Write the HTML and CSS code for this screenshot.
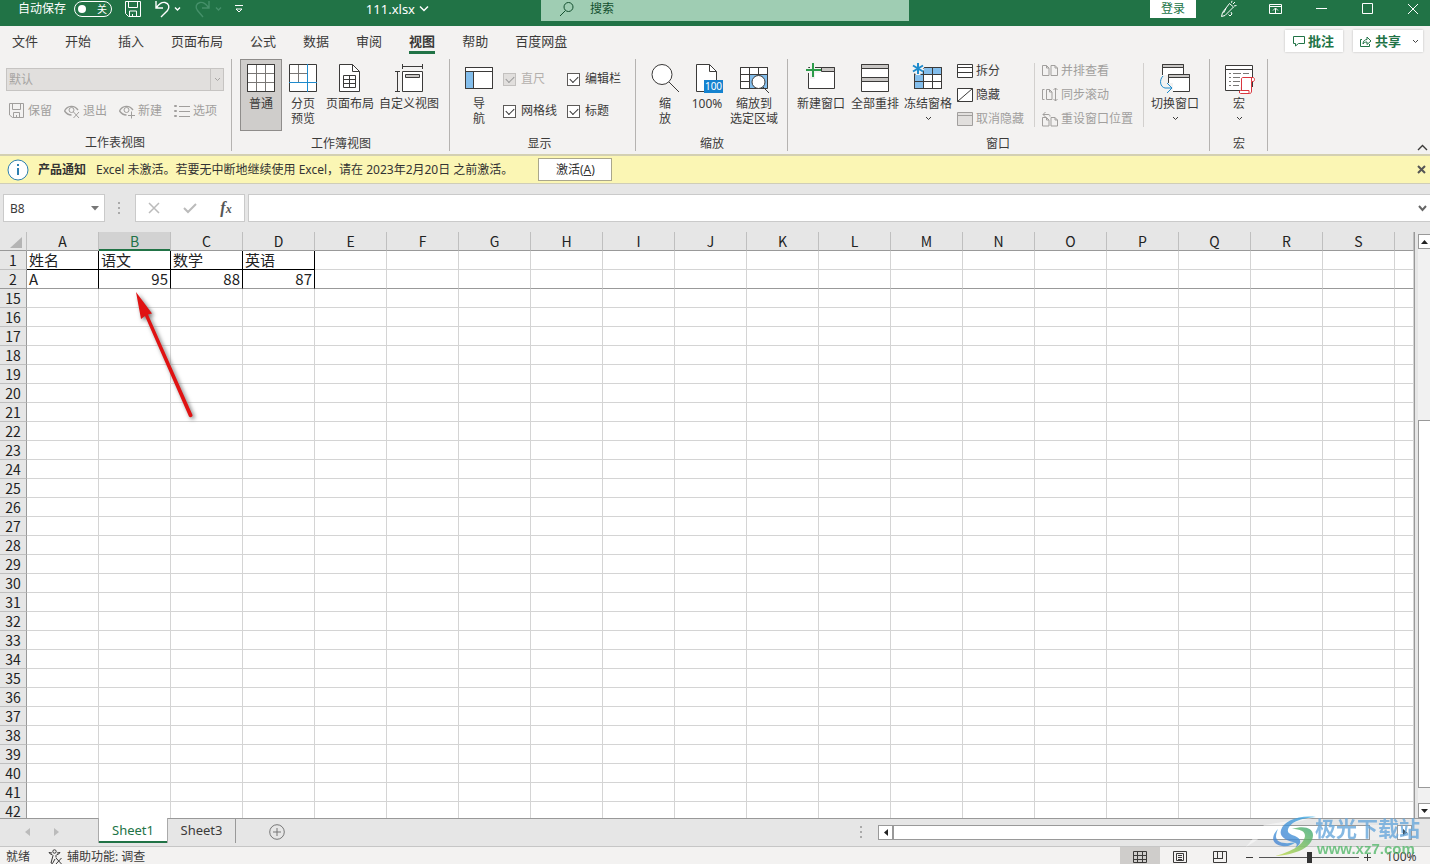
FILE: index.html
```html
<!DOCTYPE html>
<html lang="zh-CN">
<head>
<meta charset="utf-8">
<title>111.xlsx</title>
<link rel="stylesheet" href="styles.css">
</head>
<body>
<div class="app">
  <header class="titlebar">
    <div class="quick">
      <label class="autosave">自动保存
        <span class="switch"><input type="checkbox" role="switch"><span class="switch-text">关</span></span>
      </label>
      <button class="qbtn save" aria-label="保存"><svg width="18" height="18" viewBox="0 0 18 18"><path d="M1.500 1.500h15v15h-12l-3-3zM4.500 1.500v6h9v-6M5.500 16v-5h7v5M8.500 16v-2"/></svg></button>
      <button class="qbtn undo" aria-label="撤消"><svg width="28" height="18" viewBox="0 0 28 18"><path stroke-width="1.400" d="M2 1v7h7M2.500 7.500C5 4 8 2 11 2.500c4 .8 5 5 2.500 8L7 17M21 7.500l2.500 2.500L26 7.500"/></svg></button>
      <button class="qbtn redo" aria-label="恢复" disabled><svg width="28" height="18" viewBox="0 0 28 18"><path stroke-width="1.400" d="M15 1v7H8M14.500 7.500C12 4 9 2 6 2.500c-4 .8-5 5-2.500 8L9 17M22 7.500l2.500 2.500L27 7.500"/></svg></button>
      <button class="qbtn more" aria-label="自定义快速访问工具栏"><svg width="10" height="10" viewBox="0 0 10 10"><path d="M1 1.500h8M2 5l3 3 3-3z"/></svg></button>
      <button class="filename">111.xlsx <svg width="10" height="8" viewBox="0 0 10 8"><path d="M1 1.500l4 4 4-4" stroke-width="1.500"/></svg></button>
    </div>
    <label class="search"><svg width="16" height="16" viewBox="0 0 16 16"><circle cx="9.500" cy="6" r="4.500"/><path d="M6.500 9.500L1 15"/></svg><input type="text" placeholder="搜索" aria-label="搜索"></label>
    <div class="window">
      <button class="login">登录</button>
      <button class="wbtn" aria-label="新增功能"><svg width="18" height="18" viewBox="0 0 18 18"><path d="M9.500 3.500l4 3.500L5 15.500l-3.500 1 1-4zM6 8.500L3.500 13M8.500 14.500l1.500 1.500 2-2-1-2M12 .8l-.5 2M15 2l-2 2M16.500 5.500l-2.500.5"/></svg></button>
      <button class="wbtn" aria-label="功能区显示选项"><svg width="15" height="12" viewBox="0 0 15 12"><path d="M1.500 1.500h12v9h-12zM1 3.500h13M7.500 10V5.500M5 7.500L7.500 5 10 7.500"/></svg></button>
      <button class="wbtn" aria-label="最小化"><svg width="11" height="11" viewBox="0 0 11 11"><path d="M0 5.500h11"/></svg></button>
      <button class="wbtn" aria-label="最大化"><svg width="11" height="11" viewBox="0 0 11 11"><path d="M.5.500h10v10H.5z"/></svg></button>
      <button class="wbtn" aria-label="关闭"><svg width="12" height="12" viewBox="0 0 12 12"><path d="M1 1l10 10M11 1L1 11"/></svg></button>
    </div>
  </header>

  <nav class="tabs">
    <button class="tab">文件</button><button class="tab">开始</button><button class="tab">插入</button><button class="tab">页面布局</button><button class="tab">公式</button><button class="tab">数据</button><button class="tab">审阅</button><button class="tab active">视图</button><button class="tab">帮助</button><button class="tab">百度网盘</button>
    <div class="tab-actions">
      <button class="action"><svg width="14" height="12" viewBox="0 0 14 12"><path d="M1.500 1.500h11v7h-6l-3 2.500v-2.500h-2z"/></svg>批注</button>
      <button class="action share"><svg width="13" height="13" viewBox="0 0 13 13"><path d="M3 4.500H1.500v7h9V9M4 9c0-3 2-4.500 4-4.500V2l4 4-4 3.500V7C6 7 5 7.500 4 9z"/></svg>共享<svg class="caret" width="7" height="5" viewBox="0 0 7 5"><path d="M1 1l2.500 2.500L6 1"/></svg></button>
    </div>
  </nav>

  <section class="ribbon">
    <div class="group sheetview">
      <div class="body stack">
        <span class="combo"><select disabled aria-label="工作表视图"><option>默认</option></select><svg width="7" height="5" viewBox="0 0 7 5"><path d="M1 1l2.500 2.500L6 1"/></svg></span>
        <div class="minirow">
          <button class="mini" disabled><svg width="16" height="16" viewBox="0 0 16 16"><path d="M.5.500h14v14H3.500l-3-2.500zM3.500.5v6h8v-6M4.500 14.500v-5h6v5M7.500 14v-2"/></svg>保留</button>
          <button class="mini" disabled><svg width="16" height="16" viewBox="0 0 16 16"><path stroke-width="1.400" d="M.5 8c3-6 10-6 13.500-1M.5 8c2 3 4 4 7 4"/><circle cx="7.500" cy="7" r="2.500"/><path d="M9.500 9l5.500 6M15 9l-5.500 6"/></svg>退出</button>
          <button class="mini" disabled><svg width="16" height="16" viewBox="0 0 16 16"><path stroke-width="1.400" d="M.5 8c3-6 10-6 13.500-1M.5 8c2 3 4 4 7 4"/><circle cx="7.500" cy="7" r="2.500"/><path d="M12.500 8.500v7M9 12.500h7"/></svg>新建</button>
          <button class="mini" disabled><svg width="16" height="16" viewBox="0 0 16 16"><path d="M.5 2.500h2v1h-2zM.5 7.500h2v1h-2zM.5 12.500h2v1h-2zM5 3.500h11M5 8.500h11M5 13.500h11"/></svg>选项</button>
        </div>
      </div>
      <div class="caption">工作表视图</div>
    </div>

    <div class="group">
      <div class="body">
        <button class="big w42 pressed"><svg width="32" height="32" viewBox="0 0 32 32"><path class="w" d="M2.500 2.500h27v27h-27z"/><path class="g" d="M11.500 3v26M20.500 3v26M3 11.500h26M3 20.500h26"/><path d="M2.500 2.500h27v27h-27z"/></svg>普通</button>
        <button class="big w42"><svg width="32" height="32" viewBox="0 0 32 32"><path class="w" d="M2.500 2.500h27v27h-27z"/><path class="g" d="M11.500 3v17M3 11.500h17"/><path class="b" d="M20.500 2v28M2 20.500h28"/></svg>分页<br>预览</button>
        <button class="big w52"><svg width="32" height="32" viewBox="0 0 32 32"><path class="w" d="M5.500 2.500h13l7 7v20h-20z"/><path d="M18.500 2.500v7h7M9.500 13.500h12v12h-12zM9.500 17.500h12M9.500 21.500h12M15.500 13.500v12"/></svg>页面布局</button>
        <button class="big w66"><svg width="32" height="32" viewBox="0 0 32 32"><path class="w" d="M9.500 9.500h20v20h-20z"/><path class="s" d="M12.500 12.500h14v3h-14z"/><path d="M9.500 4.500h20M9.500 2v5M29.500 2v5M4.500 9v20M2 9.500h5M2 29.500h5"/></svg>自定义视图</button>
      </div>
      <div class="caption">工作簿视图</div>
    </div>

    <div class="group show">
      <div class="body">
        <button class="big w42"><svg width="32" height="32" viewBox="0 0 32 32"><path class="w" d="M2.500 5.500h27v21h-27z"/><path class="f" d="M3 9h7v17H3z"/><path d="M2.500 5.500h27v21h-27zM3 9.500h26M10.500 10v16"/></svg>导<br>航</button>
        <div class="checks">
          <label class="off"><input type="checkbox" checked disabled>直尺</label>
          <label><input type="checkbox" checked>编辑栏</label>
          <label><input type="checkbox" checked>网格线</label>
          <label><input type="checkbox" checked>标题</label>
        </div>
      </div>
      <div class="caption">显示</div>
    </div>

    <div class="group">
      <div class="body">
        <button class="big w42"><svg width="32" height="32" viewBox="0 0 32 32"><circle class="w" cx="13" cy="12.500" r="10"/><path d="M20 20l10 10"/></svg>缩<br>放</button>
        <button class="big w42"><svg width="32" height="32" viewBox="0 0 32 32"><path class="w" d="M5.500 2.500h13l7 7v20h-20z"/><path d="M18.500 2.500v7h7"/><path class="bf" d="M13 18h19v13H13z"/><text class="hundred" x="22.500" y="28" text-anchor="middle">100</text></svg>100%</button>
        <button class="big w52"><svg width="32" height="32" viewBox="0 0 32 32"><path class="w" d="M2.500 5.500h27v21h-27z"/><path class="f" d="M12 12h18v15H12z"/><path d="M2.500 5.500h27v21h-27zM11.500 5v22M20.500 5v7M3 12.500h26M3 19.500h9"/><circle class="w" cx="20.500" cy="20" r="6.500"/><path d="M25 25l6 6"/></svg>缩放到<br>选定区域</button>
      </div>
      <div class="caption">缩放</div>
    </div>

    <div class="group windows">
      <div class="body">
        <button class="big w54"><svg width="32" height="32" viewBox="0 0 32 32"><path class="w" d="M3.500 5.500h26v21h-26z"/><path class="s" d="M16.500 5.500h13v4h-13z"/><path class="halo" d="M7.500 1v16M0 8.500h16"/><path class="gr" d="M8 1v14M1 8h15"/></svg>新建窗口</button>
        <button class="big w54"><svg width="32" height="32" viewBox="0 0 32 32"><path class="w" d="M2.500 2.500h27v27h-27z"/><path class="s" d="M2.500 2.500h27v4h-27zM2.500 15.500h27v4h-27z"/></svg>全部重排</button>
        <button class="big w52"><svg width="32" height="32" viewBox="0 0 32 32"><path class="w" d="M2.500 5.500h27v21h-27z"/><path class="f" d="M3 6h26v6H12v14H3z"/><path d="M2.500 5.500h27v21h-27zM11.500 5v22M20.500 5v22M3 12.500h26M3 19.500h26"/><path class="halo" d="M6 0v13M1 3.500l10 6M11 3.500l-10 6"/><path class="ast" d="M6 1v11M1 3.500l10 6M11 3.500l-10 6"/></svg>冻结窗格<svg class="caret" width="7" height="5" viewBox="0 0 7 5"><path d="M1 1l2.500 2.500L6 1"/></svg></button>
        <div class="ministack">
          <button class="mini"><svg width="16" height="16" viewBox="0 0 16 16"><path class="w" d="M.5 1.500h15v13H.5z"/><path d="M.5 4.500h15M.5 9.500h15"/></svg>拆分</button>
          <button class="mini"><svg width="16" height="16" viewBox="0 0 16 16"><path class="w" d="M.5 1.500h15v13H.5z"/><path d="M.5 14.500l15-13"/></svg>隐藏</button>
          <button class="mini" disabled><svg width="16" height="16" viewBox="0 0 16 16"><path class="dim" d="M.5 1.500h15v13H.5zM.5 4.500h15"/></svg>取消隐藏</button>
        </div>
        <div class="ministack ruled">
          <button class="mini" disabled><svg width="16" height="16" viewBox="0 0 16 16"><path d="M.5 2.500h4l2.500 2.500v7.500H.5zM4.500 2.500V5H7M9 2.500h4l2.500 2.500v7.500H9zM13 2.500V5h2.500"/></svg>并排查看</button>
          <button class="mini" disabled><svg width="16" height="16" viewBox="0 0 16 16"><path d="M2.500 2.500h-2v10h2M4.500 2.500h3l2.500 2.500v7.500H4.500zM7.500 2.500V5H10M13.500 1v13M11.500 3l2-2 2 2M11.500 12l2 2 2-2"/></svg>同步滚动</button>
          <button class="mini" disabled><svg width="16" height="16" viewBox="0 0 16 16"><path d="M.5 6.500h4L7 9v6H.5zM4.500 6.500V9H7M9 6.500h4L15.500 9v6H9zM13 6.500V9h2.500M1 3.500h5c1.500 0 2 .5 2 2M3.500 1L1 3.500 3.500 6"/></svg>重设窗口位置</button>
        </div>
        <button class="big w54"><svg width="32" height="32" viewBox="0 0 32 32"><path class="w" d="M3.500 2.500h21v12h-21z"/><path class="s" d="M3.500 2.500h21v3h-21z"/><path class="bg" d="M0 13h10v18H0z"/><path class="w" d="M9.500 12.500h21v17h-21z"/><path class="s" d="M9.500 12.500h21v3h-21z"/><path class="bg" d="M8 21h6v10H8z"/><path class="b" d="M4 14c-4 4-3 11 2 12h7M8 21l5 5-5 5"/></svg>切换窗口<svg class="caret" width="7" height="5" viewBox="0 0 7 5"><path d="M1 1l2.500 2.500L6 1"/></svg></button>
      </div>
      <div class="caption">窗口</div>
    </div>

    <div class="group">
      <div class="body">
        <button class="big w42"><svg width="32" height="32" viewBox="0 0 32 32"><path class="w" d="M2.500 3.500h27v25h-27z"/><path d="M3 7.500h26"/><path class="g" d="M6 11.500h2M10 11.500h8M20 11.500h6M6 15.500h2M10 15.500h7M6 19.500h2M10 19.500h7M6 23.500h2M10 23.500h6"/><path class="bg" d="M17 25h15v7H17z"/><path class="r" d="M18.500 28.500V17c0-1 .5-1.500 1.500-1.500h10c2 0 2 4 0 4h-1.500v9.500c0 1.500-.5 2.500-2 2.500h-9c-1.500 0-1.500-3 0-3H26v3M28.500 19.500V16"/></svg>宏<svg class="caret" width="7" height="5" viewBox="0 0 7 5"><path d="M1 1l2.500 2.500L6 1"/></svg></button>
      </div>
      <div class="caption">宏</div>
    </div>
    <button class="collapse" aria-label="折叠功能区"><svg width="11" height="7" viewBox="0 0 11 7"><path stroke-width="1.400" d="M1 6l4.500-4.500L10 6"/></svg></button>
  </section>

  <section class="notice">
    <svg class="info" width="22" height="22" viewBox="0 0 22 22"><circle cx="11" cy="11" r="10"/><path d="M11 9v7M11 5v2"/></svg>
    <strong>产品通知</strong>
    <span class="message">Excel 未激活。若要无中断地继续使用 Excel，请在 2023年2月20日 之前激活。</span>
    <button class="activate">激活(<u>A</u>)</button>
    <button class="dismiss" aria-label="关闭通知"><svg width="9" height="9" viewBox="0 0 9 9"><path d="M1 1l7 7M8 1L1 8"/></svg></button>
  </section>

  <section class="formula">
    <div class="namebox"><input type="text" value="B8" aria-label="名称框"><button aria-label="展开名称框"><svg width="8" height="5" viewBox="0 0 8 5"><path d="M0 0h8L4 4.500z"/></svg></button></div>
    <svg class="dots" width="3" height="14" viewBox="0 0 3 14"><path d="M0 1h2v2H0zM0 6h2v2H0zM0 11h2v2H0z"/></svg>
    <div class="fx">
      <button aria-label="取消"><svg width="12" height="12" viewBox="0 0 12 12"><path stroke-width="1.500" d="M1 1l10 10M11 1L1 11"/></svg></button>
      <button aria-label="输入"><svg width="14" height="12" viewBox="0 0 14 12"><path class="tick" d="M1 6l4 4 8-8"/></svg></button>
      <button class="fn" aria-label="插入函数">f<sub>x</sub></button>
    </div>
    <div class="entry"><input type="text" aria-label="编辑栏"><svg width="9" height="7" viewBox="0 0 9 7"><path d="M1 1l3.500 4L8 1"/></svg></div>
  </section>

  <main class="sheet">
    <div class="gridwrap">
      <table class="grid" id="grid"></table>
      <svg class="arrow" width="80" height="140" viewBox="0 0 80 140"><path d="M16 10l5 27 4-3L69 134.500c1 1.500 4 .5 3.500-1.500L28 32.500l4-1z"/></svg>
    </div>
    <div class="vscroll">
      <button aria-label="向上滚动"><svg width="7" height="4" viewBox="0 0 7 4"><path d="M0 4h7L3.500 0z"/></svg></button>
      <div class="vtrack"><div class="vthumb"></div></div>
      <button aria-label="向下滚动"><svg width="7" height="4" viewBox="0 0 7 4"><path d="M0 0h7L3.500 4z"/></svg></button>
    </div>
  </main>

  <section class="sheettabs">
    <div class="tabnav">
      <button aria-label="上一个"><svg width="5" height="8" viewBox="0 0 5 8"><path d="M5 0v8L0 4z"/></svg></button>
      <button aria-label="下一个"><svg width="5" height="8" viewBox="0 0 5 8"><path d="M0 0v8l5-4z"/></svg></button>
    </div>
    <button class="stab current">Sheet1</button>
    <button class="stab other">Sheet3</button>
    <button class="add" aria-label="新工作表"><svg width="16" height="16" viewBox="0 0 16 16"><circle cx="8" cy="8" r="7.300"/><path d="M8 4v8M4 8h8"/></svg></button>
    <svg class="dots" width="3" height="14" viewBox="0 0 3 14"><path d="M0 1h2v2H0zM0 6h2v2H0zM0 11h2v2H0z"/></svg>
    <div class="hscroll">
      <button aria-label="向左滚动"><svg width="4" height="7" viewBox="0 0 4 7"><path d="M4 0v7L0 3.500z"/></svg></button>
      <div class="hthumb"></div>
      <button aria-label="向右滚动"><svg width="4" height="7" viewBox="0 0 4 7"><path d="M0 0v7l4-3.500z"/></svg></button>
    </div>
  </section>

  <footer class="status">
    <span>就绪</span>
    <button class="access"><svg width="15" height="16" viewBox="0 0 15 16"><circle cx="6.500" cy="2.500" r="1.700"/><path d="M1 3.500c0 1.500 4 2 4 3L3 14l1.500.5L7 10M12 3.500c0 1.500-4 2-4 3v2M1 3.500l3 .5M12 3.500L9 4M8 9l5.500 6M13.500 9L8 15"/></svg>辅助功能: 调查</button>
    <div class="views">
      <button class="on" aria-label="普通"><svg width="14" height="14" viewBox="0 0 14 14"><path d="M.5 1.500h13v11H.5zM4.500 1v12M9.500 1v12M0 5.500h14M0 9.500h14"/></svg></button>
      <button aria-label="页面布局"><svg width="14" height="14" viewBox="0 0 14 14"><path d="M.5 1.500h13v11H.5zM3.500 3.500h7v7h-7zM5 5.500h4M5 7.500h4M5 9.500h4"/></svg></button>
      <button aria-label="分页预览"><svg width="14" height="14" viewBox="0 0 14 14"><path d="M.5 1.500h13v11H.5zM4.500 1v7M9.500 1v7M0 8.500h10"/></svg></button>
    </div>
    <div class="zoom">
      <button aria-label="缩小"><svg width="7" height="7" viewBox="0 0 7 7"><path d="M0 3.500h7"/></svg></button>
      <input type="range" min="0" max="100" value="50" aria-label="显示比例">
      <button aria-label="放大"><svg width="7" height="7" viewBox="0 0 7 7"><path d="M0 3.500h7M3.500 0v7"/></svg></button>
      <span>100%</span>
    </div>
  </footer>

  <div class="brand">
    <svg width="80" height="44" viewBox="0 0 80 44">
      <defs><linearGradient id="sky" x1="0" y1="1" x2="1" y2="0"><stop offset="0" stop-color="#4a7fd0"/><stop offset="1" stop-color="#3fb0e6"/></linearGradient><linearGradient id="leaf" x1="0" y1="1" x2="1" y2="0"><stop offset="0" stop-color="#c3dc45"/><stop offset="1" stop-color="#3aa878"/></linearGradient></defs>
      <path class="ray" d="M4 32L22 10 74 2 32 13 12 27z"/>
      <path fill="url(#sky)" d="M74 2C56 0 42 6 39 15c-2 6 4 10 12 12 4 1 5 3 2 6 7-4 7-9 0-12-6-2-9-4-6-9 4-6 13-9 27-10z"/>
      <path fill="url(#sky)" d="M36 14c-7 7-7 15 4 17 6 1 10-1 14-4-8 2-19 2-20-5 0-3 1-6 2-8z"/>
      <path fill="url(#leaf)" d="M50 14c12-4 21-1 21 6 0 12-17 20-38 21 12-3 29-10 30-20 0-5-5-7-13-7z"/>
    </svg>
    <div class="brandtext"><span class="cn">极光下载站</span><span class="url">www.xz7.com</span></div>
  </div>
</div>
<script src="script.js"></script>
</body>
</html>
```

FILE: styles.css
```css
* { box-sizing: border-box; }
body { margin: 0; font-family: "Noto Sans", "Noto Sans CJK SC", sans-serif; font-size: 12px; color: #3b3a39; }
button, input, select { font: inherit; color: inherit; margin: 0; padding: 0; border: 0; background: none; }
button { white-space: nowrap; }
svg { display: block; flex: none; fill: none; stroke: currentColor; }
.app { position: relative; display: flex; flex-direction: column; height: 100vh; overflow: hidden; background: #e6e6e6; }

.titlebar { display: grid; grid-template-columns: 541px minmax(0, 368px) minmax(0, 1fr); height: 26px; flex: none; background: #217346; color: #fff; overflow: hidden; }
.quick { display: flex; align-items: center; height: 18px; padding-left: 18px; }
.autosave { display: flex; align-items: center; gap: 8px; line-height: 16px; }
.switch { position: relative; display: flex; }
.switch input { appearance: none; width: 38px; height: 16px; border: 1px solid #fff; border-radius: 8px; }
.switch input::before { content: ""; display: block; width: 8px; height: 8px; margin: 3px; border-radius: 50%; background: #fff; }
.switch-text { position: absolute; right: 5px; top: 0; font-size: 10px; }
.qbtn { display: flex; }
.save { margin-left: 12px; }
.undo { margin-left: 12px; }
.redo { margin-left: 12px; color: #45906a; }
.more { margin-left: 12px; }
.filename { display: flex; align-items: center; gap: 4px; margin-left: auto; margin-right: 112px; font-size: 13px; line-height: 18px; }
.search { display: flex; align-items: center; gap: 15px; height: 21px; padding: 0 18px 4px; background: #9fcdb3; color: #14502f; }
.search input { flex: 1; min-width: 0; outline: 0; }
.search input::placeholder { color: #14502f; opacity: 1; }
.window { display: flex; justify-content: flex-end; margin-right: -6px; height: 18px; }
.login { width: 46px; height: 18px; margin-right: 10px; background: #fff; color: #217346; line-height: 18px; }
.wbtn { display: flex; align-items: center; justify-content: center; width: 46px; height: 17px; }

.tabs { display: flex; align-items: flex-start; gap: 27px; height: 30px; flex: none; padding: 4px 7px 0 12px; background: #f3f2f1; font-size: 13px; }
.tab { height: 24px; line-height: 20px; border-bottom: 3px solid transparent; }
.tab.active { font-weight: 700; border-color: #217346; }
.tab-actions { display: flex; gap: 10px; margin-left: auto; }
.action { display: flex; align-items: center; gap: 2px; height: 22px; padding: 0 9px 0 7px; background: #fff; box-shadow: 0 0 2px #bbb; color: #217346; font-weight: 700; line-height: 20px; }
.share { padding: 0 4px 0 6px; gap: 3px; }
.share .caret { margin-left: 8px; color: #444; }

.ribbon { display: flex; height: 100px; flex: none; padding-top: 3px; background: #f3f2f1; border-bottom: 2px solid #d3d0b2; }
.group { display: flex; flex-direction: column; padding: 0 7px 0 8px; border-right: 1px solid #b5b3b1; height: 92px; }
.sheetview { padding: 0 7px 0 6px; }
.show { padding-right: 14px; }
.windows { padding: 0 7px 0 6px; }
.body { display: flex; height: 72px; }
.stack { flex-direction: column; gap: 12px; padding-top: 9px; }
.caption { padding-top: 5px; line-height: 16px; text-align: center; }
.combo { position: relative; display: block; width: 218px; height: 23px; color: #a6a4a2; }
.combo select { appearance: none; width: 100%; height: 100%; padding: 0 2px; border: 1px solid #c6c4c2; background: #e1dfdd; color: #a6a4a2; opacity: 1; }
.combo svg { position: absolute; right: 0; top: 0; width: 14px; height: 23px; padding: 9px 3px; border-left: 1px solid #c6c4c2; }
.minirow { display: flex; gap: 12px; padding-left: 3px; }
.mini { display: flex; align-items: center; gap: 3px; height: 16px; line-height: 16px; }
.mini:disabled { color: #a19f9d; }
.big { display: flex; flex-direction: column; align-items: center; padding-top: 3px; line-height: 15px; height: 72px; }
.big > svg:first-child { margin-bottom: 2px; overflow: visible; }
.big .caret { margin-top: 5px; }
.w42 { width: 42px; }
.w52 { width: 52px; }
.w54 { width: 54px; }
.w66 { width: 66px; }
.pressed { background: #cfcdcb; box-shadow: inset 0 0 0 1px #8f8d8b; }
.w { fill: #fff; }
.g { stroke: #797775; }
.s { fill: #c8c6c4; }
.b { stroke: #1e8bcd; }
.f { fill: #83beec; stroke: none; }
.bf { fill: #1482cf; stroke: none; }
.bg { fill: #f3f2f1; stroke: none; }
.gr { stroke: #2c9c4a; stroke-width: 2; }
.halo { stroke: #f3f2f1; stroke-width: 5; }
.ast { stroke: #1e8bcd; stroke-width: 2; }
.r { stroke: #d9363e; fill: #fff; }
.dim { fill: #e1dfdd; }
.hundred { fill: #fff; stroke: none; font-size: 10px; }
.checks { display: grid; grid-template-columns: auto auto; grid-auto-rows: 16px; gap: 16px 10px; margin-left: 3px; padding-top: 12px; }
.checks label { display: flex; align-items: center; gap: 5px; line-height: 16px; }
.checks .off { color: #b3b0ad; }
.checks input { appearance: none; width: 13px; height: 13px; border: 1px solid #5c5a58; background: #fff; }
.checks input::before { content: ""; display: block; width: 7px; height: 4px; margin: 2px; border: solid #333; border-width: 0 0 1px 1px; transform: rotate(-45deg); }
.checks input:disabled { border-color: #c3c1bf; background: #e1dfdd; }
.checks input:disabled::before { border-color: #999; }
.ministack { display: flex; flex-direction: column; gap: 8px; height: 64px; margin: 4px 0 0 3px; }
.ruled { margin: 4px 4px 0 10px; padding: 0 10px 0 7px; border: solid #d2d0ce; border-width: 0 1px; }
.collapse { align-self: flex-end; margin: 0 2px 3px auto; }

.notice { display: flex; align-items: center; height: 28px; flex: none; padding: 0 4px 0 7px; background: #fbf6b4; border-bottom: 1px solid #cfcdb8; color: #333; line-height: 18px; }
.info { color: #2d7fb0; }
.info circle { fill: #fff; }
.info path { stroke-width: 2; }
.notice strong { margin: 0 10px 0 9px; }
.activate { width: 74px; height: 23px; margin-left: 25px; border: 1px solid #aaa78c; background: #fff; }
.dismiss { margin-left: auto; color: #555; }
.dismiss svg { stroke-width: 2; }

.formula { display: flex; align-items: center; height: 48px; flex: none; padding: 0 0 0 3px; }
.namebox, .fx, .entry { display: flex; align-items: center; height: 28px; background: #fff; border: 1px solid #cacaca; }
.namebox { width: 102px; padding: 0 5px 0 6px; }
.namebox input { flex: 1; min-width: 0; }
.namebox svg { fill: #777; stroke: none; }
.dots { margin: 0 14px 0 13px; fill: #aaa; stroke: none; }
.fx { width: 110px; margin-right: 3px; justify-content: space-around; color: #bbb; }
.fx button { width: 36px; display: flex; justify-content: center; }
.tick { stroke-width: 2; }
.fx .fn { display: block; color: #555; font: italic 700 16px "Liberation Serif", serif; line-height: 20px; }
.fn sub { font-size: 12px; vertical-align: baseline; }
.entry { flex: 1; padding: 0 3px 0 6px; border-right: 0; }
.entry input { flex: 1; min-width: 0; }
.entry svg { stroke-width: 2; color: #666; }

.sheet { display: flex; flex: 1; min-height: 0; gap: 3px; border-bottom: 1px solid #999; }
.gridwrap { position: relative; flex: 1; min-width: 0; overflow: hidden; border-right: 1px solid #999; }
.grid { width: 100%; table-layout: fixed; border-collapse: separate; border-spacing: 0; font: 15px/18px "Noto Sans CJK SC", sans-serif; color: #222; }
.grid .rowhead { width: 27px; }
.grid .datacol { width: 72px; }
.grid th, .grid td { height: 19px; padding: 0; border: solid #d4d4d4; border-width: 0 1px 1px 0; white-space: nowrap; }
.grid th { font-weight: 400; font-size: 14px; background: #e6e6e6; border-color: #bfbfbf; }
.grid tbody th { border-right-color: #999; }
.grid thead th { border-bottom-color: #999; }
.grid td { background: #fff; text-align: left; padding: 0 2px; }
.grid td.num { text-align: right; }
.grid .boxed { border-right-color: #000; }
.grid .ruledown { border-bottom-color: #000; }
.grid .frozen th, .grid .frozen td { border-bottom-color: #999; }
.grid thead .picked { background: #d2d2d2; color: #217346; box-shadow: inset 0 -1px #217346; border-bottom-color: #217346; }
.grid .corner svg { margin: 4px 4px 2px auto; fill: #b4b4b4; stroke: none; }
.arrow { position: absolute; left: 120px; top: 50px; fill: #e01212; stroke: none; filter: drop-shadow(2px 2px 2px #777); }
.vscroll { display: flex; flex-direction: column; width: 12px; padding-top: 2px; background: #e6e6e6; }
.vscroll button { display: flex; justify-content: center; align-items: center; height: 15px; border: 1px solid #999; border-right: 0; background: #fff; }
.vscroll button svg, .hscroll button svg { fill: #222; stroke: none; }
.vtrack { display: grid; grid-template-rows: 171fr 368fr 15fr; flex: 1; background: #f1f1f1; }
.vthumb { grid-row: 2; border: 1px solid #999; border-right: 0; background: #fff; }

.sheettabs { display: flex; align-items: flex-start; height: 28px; flex: none; padding-right: 18px; border-bottom: 1px solid #c6c6c6; }
.tabnav { display: flex; gap: 24px; width: 98px; padding: 9px 0 0 25px; }
.tabnav svg { fill: #bbb; stroke: none; }
.stab { height: 24px; font-size: 13px; line-height: 20px; padding-bottom: 2px; }
.current { width: 70px; margin-top: -1px; height: 25px; background: #fff; border: solid #aaa; border-width: 0 1px; color: #217346; box-shadow: inset 0 -2px #217346; }
.other { width: 68px; border-right: 1px solid #999; }
.add { margin: 5px 0 0 33px; color: #777; }
.sheettabs .dots { margin: 6px 15px 0 auto; }
.hscroll { display: flex; width: 534px; margin-top: 6px; height: 15px; background: #eee; }
.hscroll button { display: flex; align-items: center; justify-content: center; width: 15px; border: 1px solid #999; background: #fff; }
.hthumb { flex: 1; margin-right: 27px; border: 1px solid #999; background: #fff; }

.status { display: flex; height: 17px; flex: none; padding: 0 12px 0 6px; background: #f3f2f1; line-height: 20px; overflow: hidden; }
.access { display: flex; align-items: center; gap: 4px; height: 20px; margin-left: 18px; }
.views { display: flex; height: 20px; margin-left: auto; }
.views button { display: flex; justify-content: center; align-items: center; width: 40px; }
.views .on { background: #cfcdcb; }
.zoom { display: flex; align-items: center; height: 20px; margin-left: 6px; }
.zoom input { appearance: none; width: 100px; height: 12px; margin: 0 5px 0 6px; background: linear-gradient(#555, #555) center / 100% 1px no-repeat; }
.zoom input::-webkit-slider-thumb { appearance: none; width: 5px; height: 11px; background: #333; }
.zoom span { width: 32px; margin-left: 15px; }

.brand { position: absolute; right: 10px; bottom: 5px; display: flex; align-items: center; opacity: .8; pointer-events: none; }
.brand svg { stroke: none; margin-right: -7px; }
.ray { fill: #fff; opacity: .6; }
.brandtext { display: flex; flex-direction: column; }
.cn { font: 700 21px/24px "Noto Sans CJK SC", sans-serif; color: #69a8dc; }
.url { font: 700 15px/20px "Liberation Sans", sans-serif; color: #55b96c; padding-left: 2px; }
```

FILE: script.js
```js
const columns = 'ABCDEFGHIJKLMNOPQRS'.split('');
const data = { 1: ['姓名', '语文', '数学', '英语'], 2: ['A', 95, 88, 87] };
const rows = [1, 2];
for (let n = 15; n <= 42; n++) rows.push(n);

let html = '<colgroup><col class="rowhead">' + columns.map(() => '<col class="datacol">').join('') + '<col></colgroup>';
html += '<thead><tr><th class="corner" aria-label="全选"><svg width="12" height="11" viewBox="0 0 12 11"><path d="M12 0v11H0z"/></svg></th>';
html += columns.map(c => `<th${c === 'B' ? ' class="picked"' : ''}>${c}</th>`).join('') + '<th></th></tr></thead><tbody>';
for (const n of rows) {
  html += `<tr${n === 2 ? ' class="frozen"' : ''}><th>${n}</th>`;
  for (let i = 0; i <= columns.length; i++) {
    const value = data[n] ? data[n][i] : undefined;
    const names = [];
    if (value !== undefined) {
      names.push('boxed');
      if (n === 1) names.push('ruledown');
      if (typeof value === 'number') names.push('num');
    }
    html += `<td class="${names.join(' ')}">${value === undefined ? '' : value}</td>`;
  }
  html += '</tr>';
}
document.getElementById('grid').innerHTML = html + '</tbody>';
```
